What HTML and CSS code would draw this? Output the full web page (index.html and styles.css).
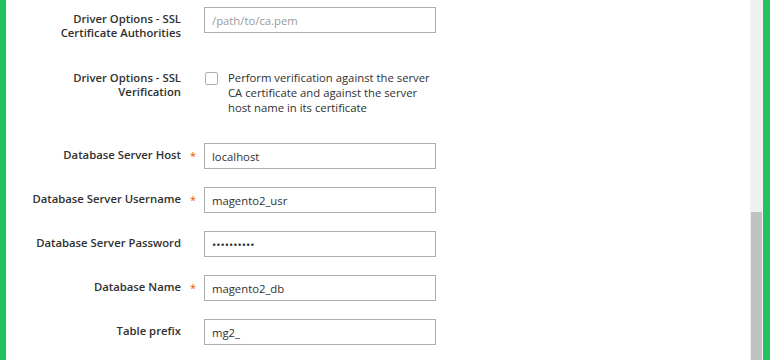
FILE: index.html
```html
<!DOCTYPE html>
<html lang="en">
<head>
    <meta charset="UTF-8">
    <meta name="viewport" content="width=device-width, initial-scale=1.0">
    <title>Database Setup</title>
    <link rel="stylesheet" href="styles.css">
</head>
<body>
    <div class="frame">
        <div class="edge"></div>
        <main class="content">
            <form class="setup-form" id="db_form">
                <div class="field field-tall">
                    <label class="field-label" for="sslCa">Driver Options - SSL<br>Certificate Authorities</label>
                    <span class="req"></span>
                    <div class="control">
                        <input type="text" id="sslCa" name="sslCa" placeholder="/path/to/ca.pem">
                    </div>
                </div>
                <div class="field field-check">
                    <label class="field-label" for="sslVerify">Driver Options - SSL<br>Verification</label>
                    <span class="req"></span>
                    <div class="control check-control">
                        <input type="checkbox" id="sslVerify" name="sslVerify">
                        <span class="check-text">Perform verification against the server<br>CA certificate and against the server<br>host name in its certificate</span>
                    </div>
                </div>
                <div class="field">
                    <label class="field-label" for="dbHost">Database Server Host</label>
                    <span class="req">*</span>
                    <div class="control">
                        <input type="text" id="dbHost" name="dbHost" value="localhost">
                    </div>
                </div>
                <div class="field">
                    <label class="field-label" for="dbUser">Database Server Username</label>
                    <span class="req">*</span>
                    <div class="control">
                        <input type="text" id="dbUser" name="dbUser" value="magento2_usr">
                    </div>
                </div>
                <div class="field">
                    <label class="field-label" for="dbPass">Database Server Password</label>
                    <span class="req"></span>
                    <div class="control">
                        <input type="password" id="dbPass" name="dbPass" value="1234567890">
                    </div>
                </div>
                <div class="field">
                    <label class="field-label" for="dbName">Database Name</label>
                    <span class="req">*</span>
                    <div class="control">
                        <input type="text" id="dbName" name="dbName" value="magento2_db">
                    </div>
                </div>
                <div class="field">
                    <label class="field-label" for="dbPrefix">Table prefix</label>
                    <span class="req"></span>
                    <div class="control">
                        <input type="text" id="dbPrefix" name="dbPrefix" value="mg2_">
                    </div>
                </div>
            </form>
        </main>
        <div class="scrollbar"><div class="thumb"></div></div>
        <div class="edge edge-right"></div>
    </div>
</body>
</html>
```

FILE: styles.css
```css
html, body {
    margin: 0;
    height: 100%;
    overflow: hidden;
}
body {
    font-family: "Open Sans", "Liberation Sans", sans-serif;
    font-size: 11.3px;
    color: #303030;
    background-color: #ffffff;
}
.frame {
    display: flex;
    height: 100%;
}
.edge {
    width: 6px;
    background-color: #22c25c;
}
.edge-right {
    width: 7px;
}
.content {
    flex: 1;
    overflow: hidden;
}
.setup-form {
    padding-top: 7px;
}
.field {
    display: grid;
    grid-template-columns: 175px 23px 232px;
    align-items: start;
    margin-bottom: 18px;
}
.field-tall {
    margin-bottom: 26px;
}
.field-check {
    margin-bottom: 28px;
}
.field-label {
    text-align: right;
    font-weight: 600;
    line-height: 14.4px;
    padding-top: 4.5px;
}
.req {
    color: #eb5202;
    text-align: center;
    font-size: 11px;
    font-weight: 400;
    padding-top: 5px;
    padding-left: 1px;
}
.control input[type="text"],
.control input[type="password"] {
    box-sizing: border-box;
    width: 232px;
    height: 26px;
    margin: 0;
    padding: 0 7px;
    border: 1px solid #adadad;
    border-radius: 0;
    font-family: "Open Sans", "Liberation Sans", sans-serif;
    font-size: 11.3px;
    color: #303030;
    background-color: #ffffff;
}
.control input::placeholder {
    color: #9a9a9a;
}
.check-control {
    display: flex;
    align-items: flex-start;
    gap: 10px;
}
.check-control input[type="checkbox"] {
    appearance: none;
    box-sizing: border-box;
    width: 13px;
    height: 13px;
    margin: 6px 0 0 1px;
    border: 1px solid #adadad;
    border-radius: 2px;
    background-color: #ffffff;
    flex: none;
}
.check-text {
    line-height: 15px;
    margin-top: 4px;
    white-space: nowrap;
}
.scrollbar {
    width: 13px;
    background-color: #f0f0f0;
    display: flex;
    flex-direction: column;
}
.thumb {
    margin: 212px 1px 0 1px;
    flex: 1;
    background-color: #c1c1c1;
}
```
